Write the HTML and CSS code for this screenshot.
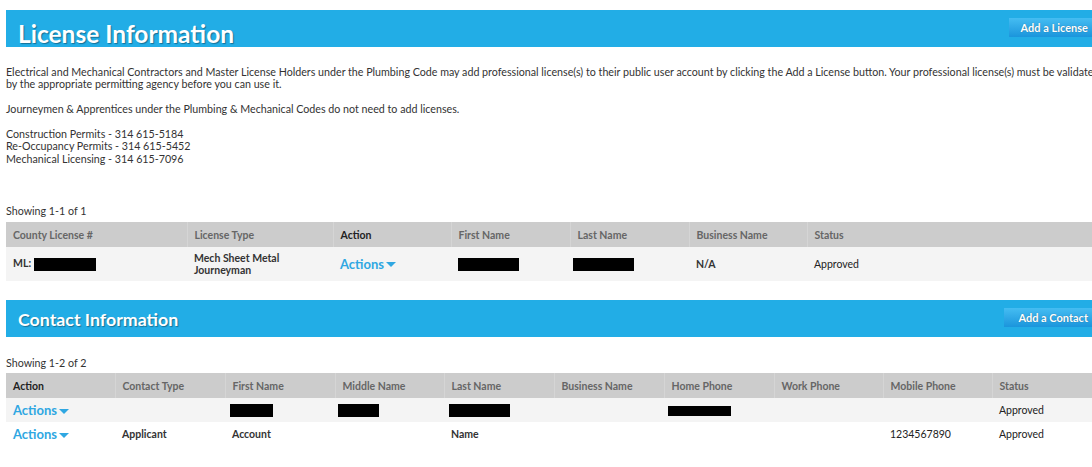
FILE: index.html
```html
<!DOCTYPE html>
<html>
<head>
<meta charset="utf-8">
<link rel="stylesheet" href="styles.css">
</head>
<body>
<div class="page">
  <div class="bar bar-license">
    <h1 class="bar-title big">License Information</h1>
    <a class="bar-btn">Add a License</a>
  </div>
  <div class="intro">
    <p>Electrical and Mechanical Contractors and Master License Holders under the Plumbing Code may add professional license(s) to their public user account by clicking the Add a License button. Your professional license(s) must be validated<br>by the appropriate permitting agency before you can use it.</p>
    <p>Journeymen &amp; Apprentices under the Plumbing &amp; Mechanical Codes do not need to add licenses.</p>
    <p>Construction Permits - 314 615-5184<br>Re-Occupancy Permits - 314 615-5452<br>Mechanical Licensing - 314 615-7096</p>
  </div>

  <div class="showing showing-1">Showing 1-1 of 1</div>
  <table class="grid lic">
    <colgroup>
      <col class="w181"><col class="w146"><col class="w118"><col class="w119"><col class="w119"><col class="w118"><col>
    </colgroup>
    <thead>
      <tr><th>County License #</th><th>License Type</th><th class="dark">Action</th><th>First Name</th><th>Last Name</th><th>Business Name</th><th>Status</th></tr>
    </thead>
    <tbody>
      <tr class="shade tall">
        <td class="semi">ML: <span class="redact r62"></span></td>
        <td class="semi">Mech Sheet Metal<br>Journeyman</td>
        <td><a class="actions">Actions<span class="caret"></span></a></td>
        <td><span class="redact r61"></span></td>
        <td><span class="redact r61 shift"></span></td>
        <td class="semi">N/A</td>
        <td>Approved</td>
      </tr>
    </tbody>
  </table>

  <div class="bar bar-contact">
    <h2 class="bar-title">Contact Information</h2>
    <a class="bar-btn">Add a Contact</a>
  </div>

  <div class="showing showing-2">Showing 1-2 of 2</div>
  <table class="grid con">
    <colgroup>
      <col class="w109"><col class="w110"><col class="w110"><col class="w109"><col class="w110"><col class="w110"><col class="w110"><col class="w109"><col class="w109"><col>
    </colgroup>
    <thead>
      <tr><th class="dark">Action</th><th>Contact Type</th><th>First Name</th><th>Middle Name</th><th>Last Name</th><th>Business Name</th><th>Home Phone</th><th>Work Phone</th><th>Mobile Phone</th><th>Status</th></tr>
    </thead>
    <tbody>
      <tr class="shade">
        <td><a class="actions">Actions<span class="caret"></span></a></td>
        <td></td>
        <td><span class="redact r43"></span></td>
        <td><span class="redact r41"></span></td>
        <td><span class="redact r61"></span></td>
        <td></td>
        <td><span class="redact r63 thin"></span></td>
        <td></td>
        <td></td>
        <td>Approved</td>
      </tr>
      <tr>
        <td><a class="actions">Actions<span class="caret"></span></a></td>
        <td class="semi">Applicant</td>
        <td class="semi">Account</td>
        <td></td>
        <td class="semi">Name</td>
        <td></td>
        <td></td>
        <td></td>
        <td>1234567890</td>
        <td>Approved</td>
      </tr>
    </tbody>
  </table>
</div>
</body>
</html>
```

FILE: styles.css
```css
html, body {
  margin: 0;
  padding: 0;
  overflow: hidden;
  background: #ffffff;
}
body {
  font-family: Lato, "Open Sans", "Liberation Sans", sans-serif;
  color: #333333;
  font-size: 10.7px;
}
.page {
  width: 1102px;
  padding: 10px 0 0 6px;
}
.bar {
  height: 37px;
  background: #22ade6;
  display: flex;
  justify-content: space-between;
  align-items: flex-start;
}
.bar-title {
  margin: 0;
  color: #ffffff;
  font-weight: bold;
  text-shadow: 1px 1px 1px rgba(0, 0, 0, 0.35);
  padding-left: 12px;
}
.bar-title.big {
  font-size: 24.5px;
  line-height: 24px;
  padding-top: 12px;
}
.bar-contact {
  margin-top: 19px;
}
.bar-contact .bar-title {
  font-size: 17.8px;
  line-height: 18px;
  padding-top: 10px;
}
.bar-btn {
  margin-top: 8px;
  margin-right: 16px;
  height: 19px;
  line-height: 19px;
  padding: 0 4px 0 12px;
  color: #ffffff;
  font-weight: bold;
  font-size: 11px;
  background: linear-gradient(#45bdf2, #1b95dc);
  text-shadow: 0 0 1px rgba(0, 0, 0, 0.4);
}
.bar-contact .bar-btn {
  padding-left: 14px;
}
.intro {
  margin-top: 19px;
  width: 1200px;
  line-height: 12.4px;
  white-space: nowrap;
}
.intro p {
  margin: 0 0 12.4px 0;
}
.showing {
  font-size: 10.7px;
  color: #333;
  height: 15px;
  line-height: 15px;
}
.showing-1 {
  margin-top: 38px;
  margin-bottom: 4px;
}
.showing-2 {
  margin-top: 18px;
  margin-bottom: 3px;
}
.grid {
  border-collapse: collapse;
  table-layout: fixed;
  width: 1096px;
}
.grid th {
  background: #cccccc;
  color: #666666;
  font-weight: bold;
  text-align: left;
  padding: 0 7px;
  height: 25px;
  border-left: 1px solid #d5d5d5;
  font-size: 10.5px;
}
.grid th:first-child {
  border-left: none;
}
.grid th.dark {
  color: #222222;
}
.grid td {
  padding: 0 7px;
  height: 24px;
  vertical-align: middle;
  color: #222;
  font-size: 10.5px;
}
.grid td.semi {
  color: #333;
  font-weight: bold;
}
.lic tr.tall td {
  height: 34px;
  line-height: 12px;
}
tr.shade td {
  background: #f4f4f4;
}
.w181 { width: 181px; }
.w146 { width: 146px; }
.w118 { width: 118px; }
.w119 { width: 119px; }
.w109 { width: 109px; }
.w110 { width: 110px; }
.actions {
  color: #2fa7e2;
  font-weight: bold;
  font-size: 13px;
  display: inline-flex;
  align-items: center;
}
.caret {
  display: inline-block;
  width: 0;
  height: 0;
  margin-left: 2px;
  margin-top: 2px;
  border-left: 5px solid transparent;
  border-right: 5px solid transparent;
  border-top: 5px solid #2fa7e2;
}
.redact {
  display: inline-block;
  background: #000;
  height: 13px;
  vertical-align: middle;
}
.r62 { width: 62px; }
.r61 { width: 61px; }
.r43 { width: 43px; margin-left: -2px; }
.r41 { width: 41px; margin-left: -4px; }
.r63 { width: 63px; margin-left: -3px; }
.thin { height: 10px; }
.shift { margin-left: -4px; }
.con .r61 { margin-left: -2px; }
```
